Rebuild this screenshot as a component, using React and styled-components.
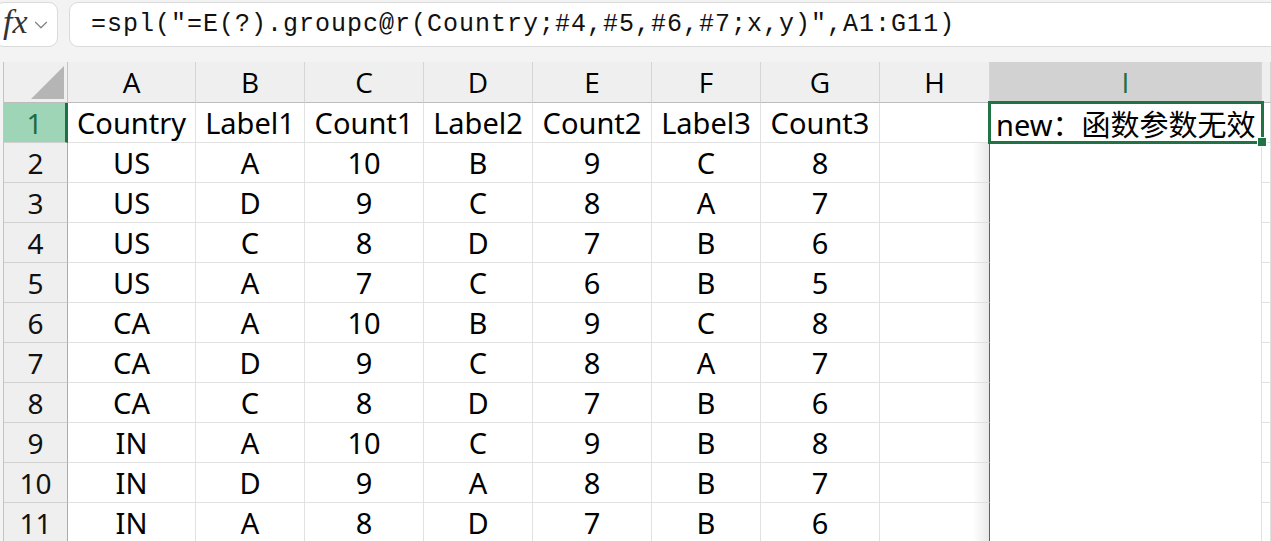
import styled, { createGlobalStyle } from "styled-components"
import { ChevronDown } from "lucide-react"

const GlobalStyle = createGlobalStyle`
body {
    margin: 0;
    background: #f3f3f3;
    overflow: hidden;
    font-family: "Noto Sans", "Noto Sans CJK SC", sans-serif;
    font-feature-settings: "calt" 0;
}
`

const Page = styled.div`
width: 1271px;
height: 541px;
display: flex;
flex-direction: column;
overflow: hidden;
`

const FormulaBar = styled.div`
height: 62px;
flex-shrink: 0;
display: flex;
align-items: flex-start;
gap: 11px;
padding-top: 2px;
box-sizing: border-box;
`

const FxBox = styled.div`
width: 63px;
height: 45px;
margin-left: -5px;
box-sizing: border-box;
background: #fff;
border: 1px solid #dadada;
border-radius: 9px;
display: flex;
align-items: center;
padding-left: 7px;
gap: 2px;
color: #808080;
`

const Fx = styled.span`
font-family: "Liberation Serif", serif;
font-style: italic;
font-size: 34px;
color: #333;
line-height: 1;
margin-top: -6px;
`

const FormulaInput = styled.div`
flex: 1;
height: 45px;
margin-right: -20px;
box-sizing: border-box;
background: #fff;
border: 1px solid #dadada;
border-radius: 9px;
display: flex;
align-items: center;
padding-left: 21px;
font-family: "Liberation Mono", monospace;
font-size: 25px;
letter-spacing: 1px;
color: #111;
white-space: nowrap;
`

const Sheet = styled.div`
flex: 1;
margin-left: 3px;
border-left: 1px solid #c4c4c4;
display: grid;
grid-template-columns: 64px 128px 109px 119px 109px 119px 109px 119px 110px 272px 1fr;
grid-template-rows: 41px;
grid-auto-rows: 40px;
background: #fff;
`

const Corner = styled.div`
background: #efefef;
border-right: 1px solid #c4c4c4;
border-bottom: 1px solid #bdbdbd;
display: flex;
align-items: flex-end;
justify-content: flex-end;
padding: 0 3px 3px 0;
`

const Triangle = styled.div`
width: 0;
height: 0;
border-left: 33px solid transparent;
border-bottom: 33px solid #b5b5b5;
`

const ColHead = styled.div`
background: ${(p) => (p.$active ? "#d2d2d2" : "#efefef")};
color: ${(p) => (p.$active ? "#1e7145" : "#000")};
border-right: 1px solid #d6d6d6;
border-bottom: 1px solid #bdbdbd;
display: flex;
align-items: center;
justify-content: center;
padding-bottom: 1px;
font-family: "Open Sans", "Noto Sans", sans-serif;
font-size: 28px;
`

const RowHead = styled.div`
background: ${(p) => (p.$active ? "#9fd5b7" : "#efefef")};
color: ${(p) => (p.$active ? "#1e6b41" : "#111")};
border-right: ${(p) => (p.$active ? "3px solid #1e7145" : "1px solid #ababab")};
border-bottom: 1px solid #d0d0d0;
display: flex;
align-items: center;
justify-content: center;
font-size: 28px;
`

const Cell = styled.div`
position: relative;
border-right: 1px solid ${(p) => (p.$split ? "#2b67cf" : "#e1e1e1")};
border-bottom: ${(p) => (p.$bare ? "none" : "1px solid #e1e1e1")};
background: ${(p) =>
    p.$split ? "linear-gradient(to right, #fff calc(100% - 16px), #e9e9e9 100%)" : "#fff"};
display: flex;
align-items: center;
justify-content: ${(p) => (p.$left ? "flex-start" : "center")};
padding-left: ${(p) => (p.$left ? "6px" : "0")};
font-size: 29px;
color: #000;
white-space: nowrap;
`

const Selection = styled.div`
position: absolute;
top: -2px;
left: -2px;
right: -3px;
bottom: -2px;
border: 3px solid #217346;
pointer-events: none;
z-index: 2;
`

const Handle = styled.div`
position: absolute;
right: -6px;
bottom: -6px;
width: 8px;
height: 8px;
background: #217346;
border: 1px solid #fff;
`

const columns = ["A", "B", "C", "D", "E", "F", "G", "H", "I", ""]

const rows = [
    ["Country", "Label1", "Count1", "Label2", "Count2", "Label3", "Count3"],
    ["US", "A", "10", "B", "9", "C", "8"],
    ["US", "D", "9", "C", "8", "A", "7"],
    ["US", "C", "8", "D", "7", "B", "6"],
    ["US", "A", "7", "C", "6", "B", "5"],
    ["CA", "A", "10", "B", "9", "C", "8"],
    ["CA", "D", "9", "C", "8", "A", "7"],
    ["CA", "C", "8", "D", "7", "B", "6"],
    ["IN", "A", "10", "C", "9", "B", "8"],
    ["IN", "D", "9", "A", "8", "B", "7"],
    ["IN", "A", "8", "D", "7", "B", "6"],
]

function App() {
    return (
        <Page>
            <GlobalStyle />
            <FormulaBar>
                <FxBox>
                    <Fx>fx</Fx>
                    <ChevronDown size={22} strokeWidth={1.3} />
                </FxBox>
                <FormulaInput>=spl("=E(?).groupc@r(Country;#4,#5,#6,#7;x,y)",A1:G11)</FormulaInput>
            </FormulaBar>
            <Sheet>
                <Corner>
                    <Triangle />
                </Corner>
                {columns.map((c, i) => (
                    <ColHead key={i} $active={c === "I"}>{c}</ColHead>
                ))}
                {rows.map((r, ri) => [
                    <RowHead key={`h${ri}`} $active={ri === 0}>{ri + 1}</RowHead>,
                    ...r.map((v, ci) => <Cell key={`${ri}-${ci}`}>{v}</Cell>),
                    <Cell key={`${ri}-h`} $split={ri > 0} />,
                    ri === 0 ? (
                        <Cell key={`${ri}-i`} $left>
                            new：函数参数无效
                            <Selection>
                                <Handle />
                            </Selection>
                        </Cell>
                    ) : (
                        <Cell key={`${ri}-i`} $bare />
                    ),
                    <Cell key={`${ri}-j`} />,
                ])}
            </Sheet>
        </Page>
    )
}

export default App
